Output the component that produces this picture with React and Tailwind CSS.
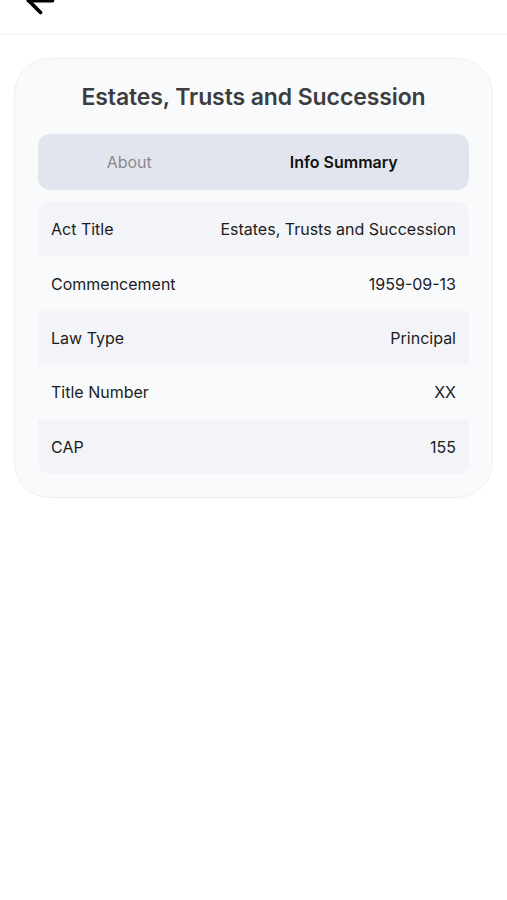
import React from "react";

const rows = [
  ["Act Title", "Estates, Trusts and Succession"],
  ["Commencement", "1959-09-13"],
  ["Law Type", "Principal"],
  ["Title Number", "XX"],
  ["CAP", "155"],
];

export default function App() {
  return (
    <div className="min-h-[900px] w-full bg-white" style={{ fontFamily: "Inter, 'Noto Sans', sans-serif" }}>
      <div className="h-[35px] border-b border-[#f3f4f6] relative overflow-hidden">
        <svg className="absolute left-[20px] top-[-20px]" width="41" height="41" viewBox="0 0 24 24" fill="none" stroke="#000" strokeWidth="2.2" strokeLinecap="round" strokeLinejoin="round">
          <path d="M19 12H5" />
          <path d="M12 19l-7-7 7-7" />
        </svg>
      </div>
      <div className="px-[14px] pt-[23px]">
        <div className="rounded-[36px] border border-[#eef0f3] bg-[#f9fafc] px-[23px] pt-[22px] pb-[23px]">
          <h1 className="text-center text-[23px] font-semibold text-[#3d3d3f] leading-[32px] tracking-[-0.1px]">
            Estates, Trusts and Succession
          </h1>
          <div className="mt-[21px] flex h-[56px] rounded-[12px] bg-[#e3e5ee] text-[16px]">
            <div className="flex flex-1 items-center justify-center pr-[32px] text-[#8a8a8e]">About</div>
            <div className="flex flex-1 items-center justify-center pr-[34px] font-semibold text-[#111]">Info Summary</div>
          </div>
          <div className="mt-[12px] overflow-hidden rounded-[12px]">
            {rows.map(([k, v], i) => (
              <div
                key={k}
                className={
                  "flex h-[54.4px] items-center justify-between px-[13px] text-[16px] text-[#1c1c1e] " +
                  (i % 2 === 0 ? "bg-[#f3f4f7]" : "bg-[#f9fafc]")
                }
              >
                <span>{k}</span>
                <span>{v}</span>
              </div>
            ))}
          </div>
        </div>
      </div>
    </div>
  );
}
